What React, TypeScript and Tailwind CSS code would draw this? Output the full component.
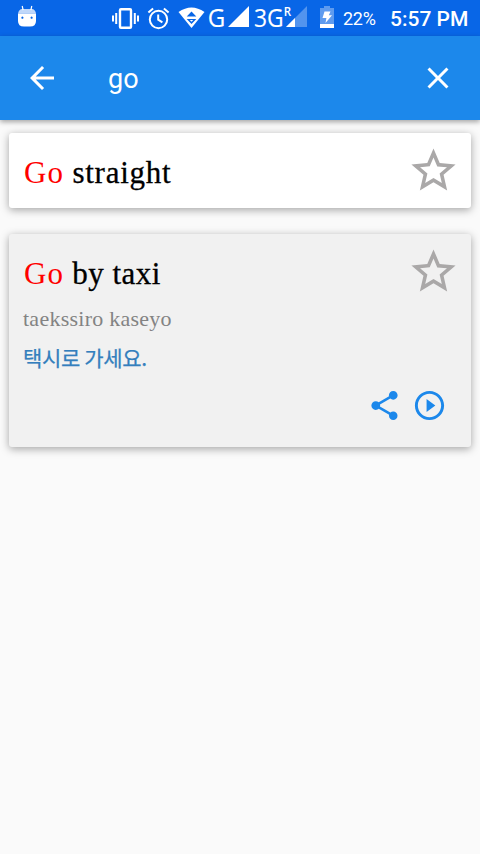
import React from "react";

const serif = "font-['Liberation_Serif',serif]";

function StatusBar() {
  return (
    <div className="flex h-9 w-full items-start bg-[#0866e7] text-white">
      <svg className="ml-[17px] mt-[5px] shrink-0" width="20" height="23" viewBox="0 0 20 23" fill="#fff">
        <path d="M5.2 1l.9 4M14.8 1l-.9 4" stroke="#fff" strokeWidth="1.2" />
        <path d="M1 8.5Q2 4 5 4h10q3 0 4 4.5z" fillOpacity=".75" />
        <path fillRule="evenodd" d="M1 8.5h18v7.5q0 5.5-6 5.5H7q-6 0-6-5.5zM5.4 11.6a1.1 1.1 0 1 0 .01 0zM14.6 11.6a1.1 1.1 0 1 0 .01 0z" />
      </svg>
      <svg className="ml-[75px] mt-[7px] shrink-0" width="27" height="23" viewBox="0 0 27 23" fill="none" stroke="#fff">
        <rect x="8" y="2.3" width="11" height="18.4" rx="1" strokeWidth="2.4" />
        <path d="M4.2 6v11M22.8 6v11M1 8.5v6M26 8.5v6" strokeWidth="2" />
      </svg>
      <svg className="ml-[8px] mt-[7px] shrink-0" width="23" height="23" viewBox="0 0 23 23" fill="none" stroke="#fff" strokeWidth="2">
        <circle cx="11.5" cy="12.5" r="8.7" />
        <path d="M11.2 7.5v5.2l4.2 2.7M1.4 5.5l4.7-4M21.6 5.5l-4.7-4" />
      </svg>
      <svg className="ml-[8px] mt-[7px] shrink-0" width="27" height="22" viewBox="0 0 27 22">
        <path d="M.5 5Q13.5-4 26.5 5L13.5 21z" fill="#fff" />
        <path d="M8.7 9.5l4.8-5 4.8 5zM8.7 12h9.6l-4.8 5z" fill="#0866e7" />
        <path d="M11.8 13h3.4l-1.7 1.8z" fill="#fff" />
      </svg>
      <svg className="ml-[2px] shrink-0" width="102" height="36" viewBox="-1 0 102 36" fill="#fff">
        <text x="-.3" y="27" fontFamily="Open Sans" fontSize="25.5" stroke="#fff" strokeWidth=".15" textLength="17.5" lengthAdjust="spacingAndGlyphs">G</text>
        <path d="M41 6v21H20z" />
        <text x="46" y="27" fontFamily="Open Sans" fontSize="25.5" stroke="#fff" strokeWidth=".15" textLength="29.6" lengthAdjust="spacingAndGlyphs">3G</text>
        <text x="75.8" y="16" fontFamily="Open Sans" fontSize="12.5" fontWeight="600" textLength="7.4" lengthAdjust="spacingAndGlyphs">R</text>
        <path d="M99 6v21H78z" fillOpacity=".3" />
        <path d="M87 18v9h-9z" />
      </svg>
      <svg className="ml-[11px] mt-[6px] shrink-0" width="14" height="22" viewBox="0 0 14 22" fill="#fff">
        <path d="M4 0h6v2h4v16H0V2h4z" fillOpacity=".35" />
        <path d="M0 18h14v4H0z" />
        <path d="M4.5 5.5h6L8.8 9.2H12L5.5 17l.9-5H2.5z" />
      </svg>
      <span className="ml-[9px] mt-[7px] w-[34px] whitespace-nowrap font-['Roboto',sans-serif] text-[18px] leading-6 tracking-[-0.3px]">22%</span>
      <span className="ml-[13px] mt-[6px] whitespace-nowrap font-['Roboto',sans-serif] text-[21px] font-medium leading-[26px]">5:57 PM</span>
    </div>
  );
}

function StarIcon() {
  return (
    <svg className="-mt-px shrink-0" width="53" height="53" viewBox="0 0 24 24" fill="#aaa8a8">
      <path d="M22 9.24l-7.19-.62L12 2 9.19 8.63 2 9.24l5.46 4.73L5.82 21 12 17.27 18.18 21l-1.63-7.03L22 9.24zM12 15.4l-3.76 2.27 1-4.28-3.32-2.88 4.38-.38L12 6.1l1.71 4.04 4.38.38-3.32 2.88 1 4.28L12 15.4z" />
    </svg>
  );
}

function Title({ rest, spacing }: { rest: string; spacing: string }) {
  return (
    <h2 className={`${serif} whitespace-nowrap text-[31px] leading-[34px] text-black`}>
      <span className="tracking-[1px] text-[#ff0000]">Go</span>
      <span className={`[-webkit-text-stroke:0.3px_black] ${spacing}`}> {rest}</span>
    </h2>
  );
}

export default function App() {
  return (
    <div className="flex h-[854px] w-[480px] flex-col overflow-hidden bg-[#fafafa]">
      <StatusBar />
      <header className="z-10 flex h-[84px] shrink-0 items-center bg-[#1c88eb] pl-6 pr-6 text-white shadow-[0_2px_5px_rgba(0,0,0,0.35)]">
        <svg width="36" height="36" viewBox="0 0 24 24" fill="currentColor">
          <path d="M20 11H7.83l5.59-5.59L12 4l-8 8 8 8 1.41-1.41L7.83 13H20v-2z" />
        </svg>
        <span className="ml-12 mt-[2px] flex-1 font-['Roboto',sans-serif] text-[27px] leading-8">go</span>
        <svg width="36" height="36" viewBox="0 0 24 24" fill="currentColor">
          <path d="M19 6.41L17.59 5 12 10.59 6.41 5 5 6.41 10.59 12 5 17.59 6.41 19 12 13.41 17.59 19 19 17.59 13.41 12z" />
        </svg>
      </header>
      <main className="flex flex-col gap-[26px] px-[9px] pt-[13px]">
        <section className="flex h-[75px] items-start justify-between rounded-[3px] bg-white pl-[15px] pr-[11px] pt-3 shadow-[0_2px_8px_rgba(0,0,0,0.35)]">
          <div className="pt-[11px]">
            <Title rest="straight" spacing="tracking-[0.75px]" />
          </div>
          <StarIcon />
        </section>
        <section className="flex h-[213px] flex-col rounded-[3px] bg-[#f1f1f1] pl-[15px] pr-[11px] pt-3 shadow-[0_2px_8px_rgba(0,0,0,0.35)]">
          <div className="flex h-[52px] items-start justify-between">
            <div className="pt-[11px]">
              <Title rest="by taxi" spacing="tracking-[0.5px]" />
            </div>
            <StarIcon />
          </div>
          <p className={`${serif} -ml-px mt-[9px] whitespace-nowrap text-[22px] leading-6 tracking-[0.25px] text-[#838383]`}>taekssiro kaseyo</p>
          <p className="-ml-px mt-[12px] whitespace-nowrap font-['Noto_Sans_CJK_KR',sans-serif] text-[21px] font-normal leading-7 tracking-[-0.35px] text-[#347fbd] [-webkit-text-stroke:0.25px_#347fbd]">택시로 가세요.</p>
          <div className="mt-[17px] flex justify-end gap-[10px] pr-[13px] text-[#1c88eb]">
            <svg width="35" height="35" viewBox="0 0 24 24" fill="currentColor">
              <path d="M18 16.08c-.76 0-1.44.3-1.96.77L8.91 12.7c.05-.23.09-.46.09-.7s-.04-.47-.09-.7l7.05-4.11c.54.5 1.25.81 2.04.81 1.66 0 3-1.34 3-3s-1.34-3-3-3-3 1.34-3 3c0 .24.04.47.09.7L8.04 9.81C7.5 9.31 6.79 9 6 9c-1.66 0-3 1.34-3 3s1.34 3 3 3c.79 0 1.5-.31 2.04-.81l7.12 4.16c-.05.21-.08.43-.08.65 0 1.61 1.31 2.92 2.92 2.92s2.92-1.31 2.92-2.92-1.31-2.92-2.92-2.92z" />
            </svg>
            <svg width="35" height="35" viewBox="0 0 24 24" fill="currentColor">
              <path d="M10 16.5l6-4.5-6-4.5v9zM12 2C6.48 2 2 6.48 2 12s4.48 10 10 10 10-4.48 10-10S17.52 2 12 2zm0 18c-4.41 0-8-3.59-8-8s3.59-8 8-8 8 3.59 8 8-3.59 8-8 8z" />
            </svg>
          </div>
        </section>
      </main>
    </div>
  );
}
